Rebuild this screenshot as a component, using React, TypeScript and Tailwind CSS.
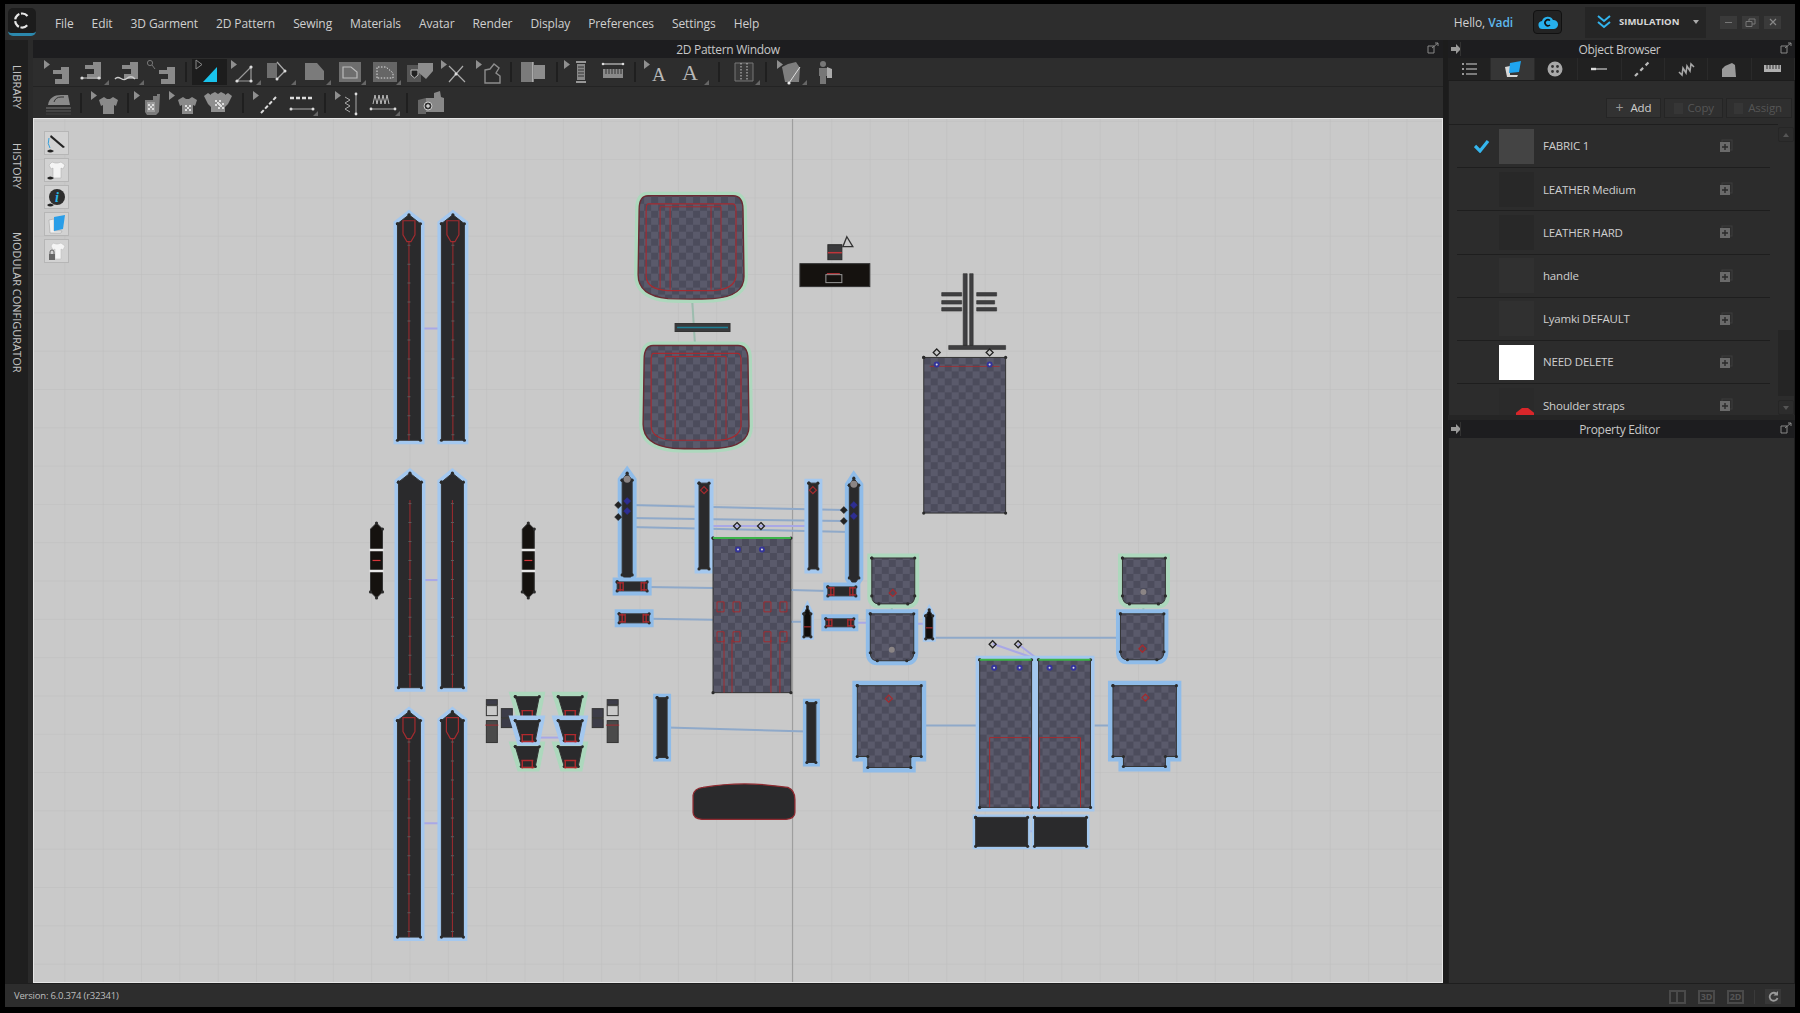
import type { ReactNode } from 'react';

const font = { fontFamily: '"Open Sans", "Noto Sans", sans-serif' };

const menu = ['File', 'Edit', '3D Garment', '2D Pattern', 'Sewing', 'Materials', 'Avatar', 'Render', 'Display', 'Preferences', 'Settings', 'Help'];

const Cur = () => <path d="M3 1v9l6-4.5z" fill="#8f8f8f" />;
const Cor = () => <path d="M33 21v5h-5z" fill="#666" />;
const Machine = ({ x = 0, y = 0 }: { x?: number; y?: number }) => (
  <path transform={`translate(${x} ${y})`} d="M0 5h8v-3h8v17h-14v-5h7v-5h-9z" fill="#8a8a8a" />
);
const Shirt = ({ x = 0, y = 0, fill = '#8a8a8a' }: { x?: number; y?: number; fill?: string }) => (
  <path transform={`translate(${x} ${y})`} d="M5 0l3 2h3l3-2 5 3-2 6-2-1v9h-11v-9l-2 1-2-6z" fill={fill} />
);
const Dots = ({ x, y }: { x: number; y: number }) => (
  <g fill="#ddd">
    <rect x={x} y={y} width="2" height="2" />
    <rect x={x + 4} y={y} width="2" height="2" />
    <rect x={x + 2} y={y + 2} width="2" height="2" />
    <rect x={x} y={y + 4} width="2" height="2" />
    <rect x={x + 4} y={y + 4} width="2" height="2" />
  </g>
);

const icons: Record<string, ReactNode> = {
  sew: (<><Cur /><Machine x={12} y={6} /></>),
  sewLine: (<><Machine x={9} y={1} /><path d="M6 19h17" stroke="#aaa" strokeWidth="1.2" /><circle cx="6" cy="19" r="1.6" fill="#ddd" /><circle cx="23" cy="19" r="1.6" fill="#ddd" /><Cor /></>),
  sewCurve: (<><Machine x={11} y={1} /><path d="M4 20c4-5 7 3 11 0s6-3 9 0" stroke="#ccc" strokeWidth="1.4" fill="none" /><Cor /></>),
  sewFind: (<><circle cx="4" cy="4" r="2.6" stroke="#777" fill="none" /><path d="M6 6l3 4" stroke="#777" /><Machine x={13} y={6} /></>),
  tri: (<><path d="M3 1v9l6-4.5z" fill="none" stroke="#888" /><path d="M10 23l14-15v15z" fill="#19c3ec" /></>),
  triLine: (<><Cur /><path d="M9 22l14-14v14z" fill="none" stroke="#999" strokeWidth="1.2" /><circle cx="9" cy="22" r="1.6" fill="#ddd" /><circle cx="23" cy="8" r="1.6" fill="#ddd" /><circle cx="23" cy="22" r="1.6" fill="#ddd" /><Cor /></>),
  shape: (<><path d="M4 4h10v15h-10z" fill="#6f6f6f" /><path d="M14 3l8 9-8 8" fill="none" stroke="#aaa" strokeWidth="1.3" /><circle cx="22" cy="12" r="1.5" fill="#ddd" /><circle cx="14" cy="20" r="1.5" fill="#ddd" /><Cor /></>),
  panel: (<><path d="M7 4h12l7 8v9h-19z" fill="#7b7b7b" /><Cor /></>),
  panelO: (<><path d="M6 3h22v20h-22z" fill="#6e6e6e" /><path d="M10 8h8l6 5v6h-14z" fill="none" stroke="#bbb" strokeWidth="1.2" /><Cor /></>),
  panelD: (<><path d="M5 3h24v20h-24z" fill="#666" /><path d="M9 19v-11h9l7 6v5z" fill="none" stroke="#ddd" strokeDasharray="1.5 1.5" /><Cor /></>),
  trace: (<><path d="M4 6h14v17h-14z" fill="#555" /><path d="M8 11h7v5l-3.5 3-3.5-3z" fill="#222" stroke="#bbb" /><path d="M15 4h15v8l-7 8-8-7z" fill="#8d8d8d" /></>),
  cross: (<><Cur /><path d="M11 7l16 16M11 23l14-16" stroke="#aaa" strokeWidth="1.2" /><circle cx="18" cy="15" r="1.5" fill="#ddd" /></>),
  notch: (<><Cur /><path d="M12 11l5-1 4-5 5 4-3 5 4 3v7h-15z" fill="none" stroke="#8d8d8d" strokeWidth="1.4" /></>),
  fold: (<><path d="M5 3h12v20h-12z" fill="#7b7b7b" /><path d="M18 6h11v14h-11z" fill="#8d8d8d" /><path d="M17 3v20" stroke="#ddd" /></>),
  ruler: (<><Cur /><path d="M15 3h10M15 23h10" stroke="#bbb" strokeWidth="1.3" /><rect x="16" y="5" width="8" height="16" fill="#888" /><path d="M17 8h6M17 11h6M17 14h6M17 17h6" stroke="#333" /></>),
  rulerH: (<><path d="M7 5h20" stroke="#bbb" strokeWidth="1.3" /><circle cx="7" cy="5" r="1.3" fill="#ddd" /><circle cx="27" cy="5" r="1.3" fill="#ddd" /><rect x="7" y="10" width="20" height="9" fill="#8a8a8a" /><path d="M10 10v5M13 10v5M16 10v5M19 10v5M22 10v5M25 10v5" stroke="#333" /></>),
  textA: (<><Cur /><text x="11" y="22" fontFamily='"Liberation Serif", serif' fontSize="19" fill="#b8b8b8">A</text></>),
  textB: (<><text x="6" y="21" fontFamily='"Liberation Serif", serif' fontSize="22" fill="#b8b8b8">A</text><Cor /></>),
  stripes: (<><path d="M8 4h18v18h-18z" fill="#3a3a3a" stroke="#777" /><path d="M14 4v18M20 4v18" stroke="#ccc" strokeDasharray="1.5 1.5" /><Cor /></>),
  measure: (<><Cur /><path d="M8 8l6-3 8-2 4 6-1 14h-14z" fill="#7e7e7e" /><path d="M15 24l11-16" stroke="#ddd" /><circle cx="15" cy="24" r="1.6" fill="#eee" /><Cor /></>),
  avatar: (<><circle cx="14" cy="5" r="3" fill="#777" /><path d="M10 9h8v8h-1v8h-6v-8h-1z" fill="#777" /><path d="M18 8l5 2v9h-5z" fill="#aaa" /></>),
  iron: (<><path d="M7 15c1-7 6-10 13-10h7l2 10z" fill="#8a8a8a" /><path d="M13 12c1-3 3-5 7-5h3" stroke="#333" fill="none" /><path d="M5 18h25" stroke="#666" strokeWidth="1.4" /><path d="M5 21h25" stroke="#4f4f4f" strokeWidth="1.4" /><path d="M5 24h25" stroke="#3e3e3e" strokeWidth="1.2" /></>),
  shirt: (<><Cur /><Shirt x={11} y={7} /></>),
  hand: (<><Cur /><path d="M14 10h8v-4h4v-2h3l-1 18-3 3h-9l-2-3z" fill="#7b7b7b" /><rect x="16" y="12" width="8" height="10" fill="#bbb" fillOpacity=".5" /><Dots x={17} y={14} /></>),
  shirtD: (<><Cur /><Shirt x={12} y={7} /><Dots x={19} y={15} /></>),
  shirtL: (<><path d="M3 6l4-3 3 2v12l-3-3z" fill="#8f8f8f" /><path d="M31 6l-4-3-3 2v12l3-3z" fill="#8f8f8f" /><path d="M10 4l4-2 3 2 3-2 4 2v18h-14z" fill="#8f8f8f" /><Dots x={14} y={10} /><Dots x={17} y={13} /></>),
  seg: (<><Cur /><path d="M11 23l15-16" stroke="#ddd" strokeWidth="2" strokeDasharray="4 2" /></>),
  stitch: (<><path d="M5 8h22" stroke="#ddd" strokeWidth="2.4" strokeDasharray="4 2" /><path d="M6 19h22" stroke="#aaa" /><circle cx="6" cy="19" r="1.5" fill="#ddd" /><circle cx="28" cy="19" r="1.5" fill="#ddd" /><Cor /></>),
  zigV: (<><Cur /><path d="M13 7l5 3-5 3 5 3-5 3 5 3" stroke="#aaa" fill="none" /><path d="M24 4v20" stroke="#aaa" /><circle cx="24" cy="4" r="1.4" fill="#ddd" /><circle cx="24" cy="24" r="1.4" fill="#ddd" /></>),
  zigH: (<><path d="M6 14l2-9 2 9 2-9 2 9 2-9 2 9 2-9 2 9" stroke="#bbb" fill="none" /><path d="M4 19h24" stroke="#aaa" /><circle cx="4" cy="19" r="1.4" fill="#ddd" /><circle cx="28" cy="19" r="1.4" fill="#ddd" /><Cor /></>),
  addPiece: (<><path d="M4 10l8-2v16h-8z" fill="#666" /><path d="M12 8h8v-5l6-2 1 6 3 1v14h-18z" fill="#888" /><circle cx="14" cy="16" r="4" fill="#333" stroke="#ccc" /><path d="M12 16h4M14 14v4" stroke="#fff" /></>),
};

const Tool = ({ name, active }: { name: string; active?: boolean }) => (
  <div className={`flex h-[26px] w-[35px] shrink-0 items-center justify-center ${active ? 'bg-[#1d1d1d]' : ''}`}>
    <svg width="34" height="26" viewBox="0 0 34 26">{icons[name]}</svg>
  </div>
);

const Sep = ({ className = '' }: { className?: string }) => <div className={`h-[20px] w-[2px] shrink-0 bg-[#1f1f1f] ${className}`} />;

const Header = ({ title }: { title: string }) => (
  <div className="relative flex h-[18px] shrink-0 items-center justify-center bg-[#1d1d1f] pr-[4px] pt-[1px] text-[12px] tracking-[-0.3px] text-[#c8c8c8]">
    <svg className="absolute left-[3px] top-[4px]" width="10" height="10" viewBox="0 0 10 10"><path d="M0 3h5v-3l5 5-5 5v-3h-5z" fill="#999" /></svg>
    <div className="absolute left-[12px] top-[2px] h-[14px] w-px bg-[#333]" />
    {title}
    <svg className="absolute right-[3px] top-[2px]" width="12" height="12" viewBox="0 0 12 12"><path d="M1 4h6v7h-6zM5 6l6-5M8 1h3v3" fill="none" stroke="#888" /></svg>
  </div>
);

const tabIcons: ReactNode[] = [
  <><path d="M2 3h2M2 8h2M2 13h2" stroke="#999" strokeWidth="2" /><path d="M6 3h11M6 8h11M6 13h11" stroke="#999" strokeWidth="1.6" /></>,
  <><path d="M2 6l5-1v9l8 0-1 2h-10z" fill="#d8d8d8" /><path d="M7 2l11-2-2 11-10 1z" fill="#1fa5f0" /></>,
  <><circle cx="9" cy="8" r="7.5" fill="#a8a8a8" /><circle cx="6.5" cy="5.5" r="1.4" fill="#333" /><circle cx="11.5" cy="5.5" r="1.4" fill="#333" /><circle cx="6.5" cy="10.5" r="1.4" fill="#333" /><circle cx="11.5" cy="10.5" r="1.4" fill="#333" /></>,
  <><path d="M2 8h15" stroke="#aaa" strokeWidth="1.5" /><path d="M1 8h5" stroke="#ddd" strokeWidth="2.4" /></>,
  <path d="M2 15l14-14" stroke="#bbb" strokeWidth="2.2" strokeDasharray="4 3.5" />,
  <path d="M2 11l3 3 1-7 3 5 1-7 3 5 1-7 3 3" stroke="#a8a8a8" strokeWidth="1.6" fill="none" />,
  <path d="M2 16v-8l3-3 7-3 3 2 1 12z" fill="#9a9a9a" />,
  <><rect x="1" y="4" width="17" height="7" fill="#b0b0b0" /><path d="M4 4v4M7 4v4M10 4v4M13 4v4M16 4v4" stroke="#333" /></>,
];

const materials = ['FABRIC 1', 'LEATHER Medium', 'LEATHER HARD', 'handle', 'Lyamki DEFAULT', 'NEED DELETE', 'Shoulder straps'];
const thumbs = ['bg-[#444444]', 'bg-[#282828]', 'bg-[#282828]', 'bg-[#303030]', 'bg-[#303030]', 'bg-white', 'bg-[#2a2a2a]'];

const MaterialRow = ({ name, index }: { name: string; index: number }) => (
  <div className="flex h-[43.2px] shrink-0 items-center border-b border-[#1e1e1e] pl-[16px] text-[11.5px] tracking-[-0.2px] text-[#cfcfcf]">
    <div className="flex w-[18px] justify-center">
      {index === 0 && (
        <svg width="16" height="13" viewBox="0 0 16 13"><path d="M1 6l5 5 8-10" fill="none" stroke="#35b6ee" strokeWidth="3.2" /></svg>
      )}
    </div>
    <div className={`relative ml-[8px] h-[35px] w-[35px] overflow-hidden ${thumbs[index]}`}>
      {index === 6 && <div className="absolute left-[17px] top-[20px] h-[9px] w-[18px] bg-[#d8262a] [clip-path:polygon(35%_0,65%_0,100%_55%,100%_100%,0_100%,0_55%)]" />}
    </div>
    <span className="ml-[9px] w-[176px]">{name}</span>
    <svg width="14" height="14" viewBox="0 0 14 14"><rect x="3" y="1" width="10" height="10" fill="none" stroke="#3c3c3c" /><rect x="1" y="3" width="10" height="10" fill="#6a6a6a" /><path d="M6 5v6M3 8h6" stroke="#2a2a2a" strokeWidth="1.4" /></svg>
  </div>
);

/* pattern pieces below use screen coordinates, the svg viewBox is set to match */
const RED = '#a32b2f';
const BLUE = '#a4c8ef';
const DEEP = '#8fbce9';
const GREEN = '#add8bd';
const LINE = '#8fa9c9';
const VIOLET = '#a9a8e6';
const DARK = '#2a2a2c';

const Halo = ({ d, color = BLUE, w = 8 }: { d: string; color?: string; w?: number }) => (
  <path d={d} fill={color} stroke={color} strokeWidth={w} strokeLinejoin="miter" />
);

const Piece = ({ d, halo, fill = DARK, w }: { d: string; halo?: string; fill?: string; w?: number }) => (
  <>
    {halo && <Halo d={d} color={halo} w={w} />}
    <path d={d} fill={fill} stroke="#333" strokeWidth="1" markerStart="url(#pt)" markerMid="url(#pt)" markerEnd="url(#pt)" />
  </>
);

const Strap = ({ x, x2, top, bottom, u }: { x: number; x2: number; top: number; bottom: number; u?: boolean }) => {
  const c = (x + x2) / 2;
  const d = `M${x} ${top + 9}L${c} ${top}L${x2} ${top + 9}V${bottom}H${x}Z`;
  return (
    <>
      <Piece d={d} halo={BLUE} />
      <path d={`M${c} ${top + 27}V${bottom}`} stroke={RED} strokeWidth="1" />
      <path d={`M${c} ${top + 30}V${bottom}`} stroke="#5c5c5c" strokeWidth="3" strokeDasharray="1 18" />
      {u && <path d={`M${c - 6} ${top + 6}H${c + 6}V${top + 20}L${c + 2} ${top + 27}H${c - 2}L${c - 6} ${top + 20}Z`} fill="none" stroke={RED} strokeWidth="1.2" />}
    </>
  );
};

const Pillow = ({ x, y, w, h }: { x: number; y: number; w: number; h: number }) => {
  const d = `M${x + 10} ${y}H${x + w - 10}Q${x + w} ${y} ${x + w} ${y + 14}L${x + w + 1} ${y + h - 22}Q${x + w + 1} ${y + h - 2} ${x + w - 30} ${y + h}Q${x + w / 2} ${y + h + 1} ${x + 30} ${y + h}Q${x} ${y + h - 3} ${x} ${y + h - 24}L${x + 1} ${y + 14}Q${x + 1} ${y} ${x + 10} ${y}Z`;
  return (
    <>
      <Halo d={d} color={GREEN} w={8} />
      <path d={d} fill="url(#checker)" stroke="#6b2a33" strokeWidth="1.4" />
      <path d={`M${x + 10} ${y + 8}H${x + w - 10}Q${x + w - 7} ${y + 8} ${x + w - 7} ${y + 16}V${y + h - 22}Q${x + w - 9} ${y + h - 9} ${x + w - 30} ${y + h - 8}H${x + 30}Q${x + 9} ${y + h - 9} ${x + 8} ${y + h - 22}V${y + 16}Q${x + 8} ${y + 8} ${x + 10} ${y + 8}Z`} fill="none" stroke="#a52a30" strokeWidth="1.2" />
      <path d={`M${x + 22} ${y + 11}V${y + h - 10}M${x + 32} ${y + 11}V${y + h - 9}M${x + w - 32} ${y + 11}V${y + h - 9}M${x + w - 22} ${y + 11}V${y + h - 10}M${x + 22} ${y + 11}H${x + w - 22}`} fill="none" stroke="#a52a30" strokeWidth="1" />
    </>
  );
};

const Diamond = ({ x, y, color = '#222', hollow }: { x: number; y: number; color?: string; hollow?: boolean }) => (
  <path d={`M${x} ${y - 3.5}L${x + 3.5} ${y}L${x} ${y + 3.5}L${x - 3.5} ${y}Z`} fill={hollow ? 'none' : color} stroke={color} strokeWidth={hollow ? 1.3 : 0.6} />
);

const BlueDot = ({ x, y }: { x: number; y: number }) => (
  <>
    <circle cx={x} cy={y} r="3" fill="#34349a" />
    <circle cx={x} cy={y} r="1" fill="#ddd" />
  </>
);

const Tab = ({ x, y, w, h, halo = DEEP }: { x: number; y: number; w: number; h: number; halo?: string }) => (
  <>
    <Piece d={`M${x} ${y}h${w}v${h}h${-w}Z`} halo={halo} w={9} />
    <path d={`M${x + 3} ${y}v${h}M${x + 6} ${y}v${h}M${x + w - 3} ${y}v${h}M${x + w - 6} ${y}v${h}M${x} ${y + 1}h6M${x} ${y + h - 1}h6M${x + w - 6} ${y + 1}h6M${x + w - 6} ${y + h - 1}h6`} stroke="#b02a2e" strokeWidth="1.3" fill="none" />
  </>
);

const pocket = (x: number, y: number, w: number, h: number) =>
  `M${x} ${y}H${x + w}V${y + h - 8}Q${x + w} ${y + h} ${x + w - 7} ${y + h}H${x + 7}Q${x} ${y + h} ${x} ${y + h - 8}Z`;

const Trapezoid = ({ cx, y, halo }: { cx: number; y: number; halo: string }) => {
  const d = `M${cx - 12} ${y}H${cx + 12}L${cx + 8} ${y + 20}H${cx - 6}Z`;
  return (
    <>
      <Piece d={d} halo={halo} w={10} />
      <path d={`M${cx - 6} ${y + 14}H${cx + 6}M${cx - 5} ${y + 14}V${y + 22}M${cx + 5} ${y + 14}V${y + 22}M${cx - 6} ${y + 21}H${cx + 7}`} stroke="#b02a2e" strokeWidth="1.4" fill="none" />
    </>
  );
};

const SmallBlack = ({ x, y, w, h }: { x: number; y: number; w: number; h: number }) => (
  <>
    <path d={`M${x} ${y + 6}L${x + w / 2} ${y}L${x + w} ${y + 6}V${y + h - 6}L${x + w / 2} ${y + h}L${x} ${y + h - 6}Z`} fill="#15120f" stroke="#333" markerMid="url(#pt)" />
    <path d={`M${x - 1} ${y + 27}h${w + 2}M${x - 1} ${y + 48}h${w + 2}`} stroke="#e8e8e8" strokeWidth="2.5" />
    <path d={`M${x + 2} ${y + 37.5}h${w - 4}`} stroke="#d8363a" strokeWidth="1.2" />
  </>
);

const Brackets = ({ x, x2 }: { x: number; x2: number }) => (
  <>
    <rect x={x} y="700" width="11" height="5" fill="#3c3c48" stroke="#333" />
    <rect x={x} y="706" width="11" height="10" fill="none" stroke="#333" />
    <rect x={x} y="721" width="11" height="22" fill="#4a4a4a" stroke="#333" />
    <path d={`M${x - 1} 725.5h13`} stroke={RED} />
    <rect x={x2} y="709" width="11" height="9" fill="#3c3c48" stroke="#333" />
    <rect x={x2} y="719" width="11" height="9" fill="#3c3c48" stroke="#333" />
  </>
);

function PatternCanvas() {
  return (
    <svg className="absolute inset-0 h-full w-full" viewBox="33 118 1410 865" preserveAspectRatio="none">
      <defs>
        <pattern id="grid" x="25" y="43" width="38.4" height="38.4" patternUnits="userSpaceOnUse">
          <path d="M38.4 0H0V38.4" fill="none" stroke="#bdbdbd" strokeWidth="1" />
        </pattern>
        <pattern id="checker" width="14" height="14" patternUnits="userSpaceOnUse">
          <rect width="14" height="14" fill="#4c4c5c" />
          <rect width="7" height="7" fill="#5a5a6b" />
          <rect x="7" y="7" width="7" height="7" fill="#5a5a6b" />
        </pattern>
        <marker id="pt" markerUnits="userSpaceOnUse" markerWidth="5" markerHeight="5" refX="2.5" refY="2.5">
          <circle cx="2.5" cy="2.5" r="1.6" fill="#2b2b2b" />
        </marker>
      </defs>
      <rect x="33" y="118" width="1410" height="865" fill="#c9c9c9" />
      <rect x="33" y="118" width="1410" height="865" fill="url(#grid)" />
      <path d="M792.5 118V983" stroke="#9b9b9b" strokeWidth="1" />

      {/* links */}
      <g fill="none" strokeWidth="2">
        <path d="M420 328H441M421 580H441M420 824H441" stroke={VIOLET} />
        <path d="M692 298L695 345" stroke="#9cbcae" />
        <path d="M630 505L844 510M630 518L844 521M630 527L850 532M647 587L713 588M649 619L713 620M791 590L828 591M791 622L805 622M667 728L807 732M933 638L1121 638M921 726L980 726M1095 726L1113 726" stroke={LINE} />
        <path d="M709 526H809M856 623H870M915 624H926M993 644L1039 660M1018 644L1039 660M1032 735H1039M1028 832H1035" stroke={VIOLET} />
        <path d="M892 604V614M1144 604V614" stroke="#9cbcae" />
        <path d="M538 738H561" stroke={VIOLET} />
      </g>

      {/* long straps */}
      <Strap x={397} x2={420} top={214} bottom={440} u />
      <Strap x={441} x2={464} top={214} bottom={440} u />
      <Strap x={398} x2={421} top={473} bottom={688} />
      <Strap x={441} x2={463} top={473} bottom={688} />
      <Strap x={397} x2={420} top={712} bottom={938} u />
      <Strap x={441} x2={463} top={712} bottom={938} u />
      <SmallBlack x={370} y={523} w={12} h={75} />
      <SmallBlack x={522} y={523} w={12} h={75} />

      {/* cuffs */}
      <Brackets x={486} x2={501} />
      <Brackets x={607} x2={592} />
      <Trapezoid cx={527} y={697} halo={GREEN} />
      <Trapezoid cx={570} y={697} halo={GREEN} />
      <Trapezoid cx={527} y={747} halo={GREEN} />
      <Trapezoid cx={570} y={747} halo={GREEN} />
      <Trapezoid cx={527} y={721} halo={BLUE} />
      <Trapezoid cx={570} y={721} halo={BLUE} />

      {/* pillows */}
      <Pillow x={638} y={195} w={105} h={103} />
      <Pillow x={643} y={345} w={105} h={103} />
      <rect x="675" y="323" width="55" height="8" fill="#3a3a3c" stroke="#333" />
      <path d="M677 327H728" stroke="#1c7f95" strokeWidth="1.4" />

      {/* tag */}
      <rect x="828" y="244" width="14" height="15" fill="#3a3a3c" stroke="#2b2b2b" />
      <path d="M828 252H842" stroke="#c0353a" strokeWidth="1.5" />
      <path d="M847 236L853 246H843Z" fill="none" stroke="#333" strokeWidth="1.3" />
      <rect x="800" y="263" width="70" height="23" fill="#15120f" stroke="#333" />
      <rect x="826" y="274" width="16" height="8" fill="none" stroke="#999" />
      <path d="M827 273H840" stroke="#c0353a" />

      {/* back panel with T */}
      <path d="M963.5 273h4v72h-4zM970 273h3.5v72h-3.5zM949 345h57v4h-57zM942 292h20v3.5h-20zM942 300h20v3.5h-20zM942 307h20v3.5h-20zM977 292h20v3.5h-20zM977 300h18v3.5h-18zM977 307h20v3.5h-20z" fill="#3f3f41" stroke="#333" strokeWidth=".6" />
      <Diamond x={937} y={352} hollow />
      <Diamond x={990} y={352} hollow />
      <Piece d="M924 357H1006V513H924Z" fill="url(#checker)" />
      <path d="M930 366H1000" stroke={RED} strokeWidth=".8" />
      <BlueDot x={937} y={364} />
      <BlueDot x={990} y={364} />

      {/* front panel group */}
      <Piece d="M622 480L627 473L632 480V575L627 582L622 575Z" halo={DEEP} w={9} />
      <Piece d="M699 483H709V569H699Z" halo={BLUE} w={9} />
      <Piece d="M809 483H818V569H809Z" halo={BLUE} w={9} />
      <Piece d="M849.5 485L854 478L859 485V578L854 585L849.5 578Z" halo={DEEP} w={9} />
      <circle cx="627" cy="479" r="3.5" fill="#8b8585" />
      <circle cx="854" cy="484" r="3.5" fill="#8b8585" />
      <Diamond x={627} y={501} color="#2e2e92" />
      <Diamond x={627} y={511} color="#2e2e92" />
      <Diamond x={854} y={505} color="#2e2e92" />
      <Diamond x={854} y={516} color="#2e2e92" />
      <Diamond x={618} y={505} />
      <Diamond x={618} y={517} />
      <Diamond x={844} y={510} />
      <Diamond x={844} y={521} />
      <Diamond x={704} y={490} color={RED} hollow />
      <Diamond x={813} y={490} color={RED} hollow />
      <Diamond x={737} y={526} hollow />
      <Diamond x={761} y={526} hollow />

      <Piece d="M713 538H791V693H713Z" fill="url(#checker)" />
      <path d="M713 538H791" stroke="#3cb54a" strokeWidth="2" />
      <BlueDot x={738} y={549.5} />
      <BlueDot x={762} y={549.5} />
      <path d="M717 602h7v10h-7zM733 602h7v10h-7zM764 602h7v10h-7zM780 602h7v10h-7zM717 632h7v10h-7zM733 632h7v10h-7zM764 632h7v10h-7zM780 632h7v10h-7zM724 640V693M732 640V693M771 640V693M780 640V693" fill="none" stroke={RED} strokeWidth="1" />

      <Tab x={617} y={582} w={30} h={9} />
      <Tab x={619} y={614} w={30} h={9} />
      <Tab x={828} y={587} w={28} h={9} />
      <Tab x={826} y={619} w={28} h={8} />
      <Piece d="M804 614L807.5 607L811 614V637H804Z" fill="#100e0c" halo={BLUE} w={6} />
      <path d="M804 627H811" stroke={RED} strokeWidth="1.2" />
      <Piece d="M926 616L929.5 610L933 616V639H926Z" fill="#100e0c" halo={BLUE} w={6} />
      <path d="M926 628H933" stroke={RED} strokeWidth="1.2" />

      {/* pockets */}
      <Piece d={pocket(872, 558, 43, 46)} halo={GREEN} fill="url(#checker)" w={9} />
      <Piece d={pocket(870.5, 614, 43.5, 47)} halo={DEEP} fill="url(#checker)" w={9} />
      <Piece d={pocket(1123, 558, 43, 46)} halo={GREEN} fill="url(#checker)" w={9} />
      <Piece d={pocket(1121, 614, 43.5, 46)} halo={DEEP} fill="url(#checker)" w={9} />
      <Diamond x={893} y={593} color={RED} hollow />
      <circle cx="892" cy="650" r="3" fill="#8b8585" />
      <circle cx="1144" cy="592" r="3" fill="#8b8585" />
      <Diamond x={1143} y={649} color={RED} hollow />

      <Piece d="M857.5 686H921.5V757H911V768H868V757H857.5Z" halo={DEEP} fill="url(#checker)" w={10} />
      <Piece d="M1113.5 686H1177V757H1166V767H1124V757H1113.5Z" halo={DEEP} fill="url(#checker)" w={10} />
      <Diamond x={889} y={699} color={RED} hollow />
      <Diamond x={1146} y={698} color={RED} hollow />

      <Piece d="M980 660H1032V808H980Z" halo={BLUE} w={8} fill="url(#checker)" />
      <Piece d="M1039 660H1091V808H1039Z" halo={BLUE} w={8} fill="url(#checker)" />
      <path d="M980 660H1032M1039 660H1091" stroke="#3cb54a" strokeWidth="2" />
      <path d="M990 808V738H1030.5V808M1040 808V738H1081V808" fill="none" stroke={RED} strokeWidth="1" />
      <BlueDot x={994.5} y={668} />
      <BlueDot x={1020} y={668} />
      <BlueDot x={1050} y={668} />
      <BlueDot x={1074} y={668} />
      <Diamond x={993} y={644.5} hollow />
      <Diamond x={1018.5} y={644.5} hollow />
      <Piece d="M976 818H1028V847H976Z" halo={BLUE} w={6} />
      <Piece d="M1035 818H1087V847H1035Z" halo={BLUE} w={6} />

      {/* small bars and oblong */}
      <Piece d="M657 698H667V758H657Z" halo={DEEP} w={8} />
      <Piece d="M807 703H816V763H807Z" halo={DEEP} w={8} />
      <path d="M703 788Q744 781 788 788Q795 791 795 800V813Q795 819 786 820H702Q693 819 693 813V796Q694 789 703 788Z" fill={DARK} stroke="#8f2a30" strokeWidth="1.3" />
    </svg>
  );
}

const Palette = ({ children }: { children: ReactNode }) => (
  <div className="flex h-[24px] w-[25px] items-center justify-center border border-[#b6b6b6] bg-[#d2d2d2]">
    <svg width="21" height="21" viewBox="0 0 21 21">{children}</svg>
  </div>
);

const Eye = () => <path d="M1 18q3-3 7 0-4 3-7 0z" fill="#222" />;

export default function App() {
  return (
    <div className="h-[1013px] w-[1800px] overflow-hidden bg-black pb-[6px] pl-[5px] pr-[5px] pt-[4px]" style={font}>
      <div className="flex h-full flex-col bg-[#2d2d2d]">
        {/* title bar */}
        <div className="flex h-[36px] shrink-0 items-center bg-[#2d2d2d] text-[12px] tracking-[-0.1px] text-[#d0d0d0]">
          <div className="ml-[3px] flex h-[28px] w-[28px] items-center justify-center rounded-[5px] border-b-[3px] border-[#2b88ad] bg-[#1c1c1c]">
            <svg width="17" height="17" viewBox="0 0 17 17"><path d="M13.5 4A7 7 0 1 0 13.5 13" fill="none" stroke="#e8e8e8" strokeWidth="2.2" strokeDasharray="7 1.6" /></svg>
          </div>
          <nav className="ml-[19px] flex gap-[18px] pt-[3px]">
            {menu.map((m) => <span key={m}>{m}</span>)}
          </nav>
          <div className="ml-auto flex items-center">
            <span className="pt-[1px]">Hello, <span className="font-semibold text-[#5db8ee]">Vadi</span></span>
            <div className="ml-[20px] flex h-[24px] w-[29px] items-center justify-center rounded-[4px] border border-[#111] bg-[#232323]">
              <svg width="20" height="15" viewBox="0 0 20 15"><path d="M5 14a4 4 0 0 1-1-8 6 6 0 0 1 11-1 4.5 4.5 0 0 1 1 9z" fill="#27b0ec" /><path d="M12 5.5a3 3 0 1 0 0 4.5" fill="none" stroke="#111" strokeWidth="1.6" /></svg>
            </div>
            <div className="ml-[23px] flex h-[31px] w-[121px] items-center bg-[#252525] pl-[12px]">
              <svg width="14" height="14" viewBox="0 0 14 14"><path d="M1 1l6 5 6-5M1 7l6 5 6-5" fill="none" stroke="#32b4ee" strokeWidth="2" /></svg>
              <span className="ml-[8px] text-[9.5px] font-bold tracking-normal text-[#d8d8d8]">SIMULATION</span>
              <div className="ml-[14px] h-0 w-0 border-x-[3px] border-t-[4px] border-x-transparent border-t-[#aaa]" />
            </div>
            <div className="ml-[14px] mr-[14px] flex gap-[5px]">
              <div className="flex h-[13px] w-[17px] items-center justify-center bg-[#3a3a3a]"><div className="h-px w-[7px] bg-[#777]" /></div>
              <div className="flex h-[13px] w-[17px] items-center justify-center bg-[#3a3a3a]">
                <svg width="11" height="9" viewBox="0 0 11 9"><path d="M1 3.5h6v5h-6zM4 3V1h6v5h-3" fill="none" stroke="#777" /></svg>
              </div>
              <div className="flex h-[13px] w-[17px] items-center justify-center bg-[#3a3a3a]">
                <svg width="8" height="8" viewBox="0 0 8 8"><path d="M1 1l6 6M7 1l-6 6" stroke="#888" strokeWidth="1.2" /></svg>
              </div>
            </div>
          </div>
        </div>

        <div className="flex min-h-0 flex-1">
          {/* left rail */}
          <div className="flex w-[23px] shrink-0 flex-col items-center bg-[#1f1f1f] pt-[25px] text-[11px] text-[#c4c4c4]">
            <span className="h-[78px] tracking-[0.2px] [writing-mode:vertical-rl]">LIBRARY</span>
            <span className="h-[89px] tracking-[0.2px] [writing-mode:vertical-rl]">HISTORY</span>
            <span className="[writing-mode:vertical-rl]">MODULAR CONFIGURATOR</span>
          </div>
          <div className="w-[5px] shrink-0 bg-[#2a2a2a]" />

          {/* 2D window */}
          <div className="flex w-[1410px] shrink-0 flex-col">
            <div className="relative flex h-[18px] shrink-0 items-center justify-center bg-[#1d1d1f] pr-[20px] pt-[1px] text-[12px] tracking-[-0.3px] text-[#c8c8c8]">
              2D Pattern Window
              <svg className="absolute right-[4px] top-[2px]" width="12" height="12" viewBox="0 0 12 12"><path d="M1 4h6v7h-6zM5 6l6-5M8 1h3v3" fill="none" stroke="#888" /></svg>
            </div>
            <div className="flex h-[29px] shrink-0 items-center border-b border-[#232323] pl-[7px]">
              <Tool name="sew" /><Tool name="sewLine" /><Tool name="sewCurve" /><Tool name="sewFind" />
              <Sep className="mx-[5px]" />
              <Tool name="tri" active /><Tool name="triLine" /><Tool name="shape" /><Tool name="panel" /><Tool name="panelO" /><Tool name="panelD" /><Tool name="trace" /><Tool name="cross" /><Tool name="notch" />
              <Sep className="mx-[3px]" />
              <Tool name="fold" />
              <Sep className="ml-[6px] mr-[2px]" />
              <Tool name="ruler" /><Tool name="rulerH" />
              <Sep className="mx-[4px]" />
              <Tool name="textA" /><Tool name="textB" />
              <Sep className="ml-[8px] mr-[6px]" />
              <Tool name="stripes" />
              <Sep className="ml-[4px] mr-[6px]" />
              <Tool name="measure" /><Tool name="avatar" />
            </div>
            <div className="flex h-[31px] shrink-0 items-center pl-[7px]">
              <Tool name="iron" />
              <Sep className="mx-[5px]" />
              <Tool name="shirt" />
              <Sep className="ml-[5px] mr-[1px]" />
              <Tool name="hand" /><Tool name="shirtD" /><Tool name="shirtL" />
              <Sep className="ml-[7px] mr-[5px]" />
              <Tool name="seg" /><Tool name="stitch" />
              <Sep className="mx-[5px]" />
              <Tool name="zigV" /><Tool name="zigH" />
              <Sep className="mx-[5px]" />
              <Tool name="addPiece" />
            </div>
            <div className="relative min-h-0 flex-1 border border-[#e6e6e6]">
              <PatternCanvas />
              <div className="absolute left-[10px] top-[12px] flex flex-col gap-[3px]">
                <Palette><path d="M5 2l14 12-2 1L4 4z" fill="#222" /><path d="M3 5Q1 11 4 15" stroke="#35a0dc" fill="none" /><Eye /></Palette>
                <Palette><path d="M6 2l3 1h3l3-1 4 3-2 4-2-1v10H7V8L5 9 3 5z" fill="#f4f4f4" stroke="#aaa" strokeWidth=".5" /><Eye /></Palette>
                <Palette><circle cx="11" cy="10" r="8" fill="#2e2e2e" /><text x="11" y="15" textAnchor="middle" fontFamily='"Liberation Serif", serif' fontStyle="italic" fontWeight="700" fontSize="14" fill="#28b5e8">i</text><Eye /></Palette>
                <Palette><path d="M3 6l5-1v12h8l-1 2H4z" fill="#f2f2f2" stroke="#999" strokeWidth=".5" /><path d="M8 3l11-2-2 14-9 2z" fill="#2a9ee8" /></Palette>
                <Palette><path d="M7 2l3 1h2l3-1 4 3-2 4-2-1v10H9V8L7 9 5 5z" fill="#f4f4f4" stroke="#bbb" strokeWidth=".5" /><rect x="3" y="13" width="6" height="6" fill="#666" /><path d="M4 13v-2a2 2 0 0 1 4 0v2" fill="none" stroke="#666" /></Palette>
              </div>
            </div>
          </div>
          <div className="w-[5px] shrink-0 bg-[#1c1c1c]" />

          {/* right panels */}
          <div className="flex min-w-0 flex-1 flex-col">
            <Header title="Object Browser" />
            <div className="flex h-[23px] shrink-0 border-b border-[#1c1c1c] bg-[#212121]">
              {tabIcons.map((t, i) => (
                <div key={i} className={`flex w-[43.4px] items-center justify-center border-r border-[#2a2a2a] ${i === 1 ? 'bg-[#363636]' : ''}`}>
                  <svg width="19" height="17" viewBox="0 0 19 17">{t}</svg>
                </div>
              ))}
            </div>
            <div className="flex h-[334px] shrink-0 flex-col border-x border-[#1f1f1f] bg-[#2c2c2c]">
              <div className="flex h-[43px] shrink-0 items-start justify-end gap-[3px] pr-[2px] pt-[17px] text-[11.5px] tracking-[-0.1px]">
                <div className="flex h-[20px] w-[55px] items-center justify-center gap-[7px] border border-[#252525] bg-[#323232] text-[#cfcfcf]">
                  <span className="text-[14px] leading-none text-[#999]">+</span>Add
                </div>
                <div className="flex h-[20px] w-[59px] items-center justify-between border border-[#252525] bg-[#2f2f2f] pl-[9px] pr-[8px] text-[#555]">
                  <div className="h-[11px] w-[9px] bg-[#363636]" />Copy
                </div>
                <div className="flex h-[20px] w-[66px] items-center justify-between border border-[#252525] bg-[#2f2f2f] pl-[7px] pr-[9px] text-[#555]">
                  <div className="h-[11px] w-[9px] bg-[#363636]" />Assign
                </div>
              </div>
              <div className="flex min-h-0 flex-1">
                <div className="min-h-0 flex-1 overflow-hidden border-t border-[#1e1e1e] pl-[8px] pr-[8px]">
                  {materials.map((m, i) => <MaterialRow key={m} name={m} index={i} />)}
                </div>
                <div className="flex w-[16px] shrink-0 flex-col pt-[3px]">
                  <div className="flex h-[15px] items-center justify-center rounded-[2px] border border-[#262626]">
                    <div className="h-0 w-0 border-x-[3px] border-b-[4px] border-x-transparent border-b-[#555]" />
                  </div>
                  <div className="flex-1 pt-[188px]"><div className="h-[66px] bg-[#252525]" /></div>
                  <div className="flex h-[15px] items-center justify-center rounded-[2px] border border-[#262626]">
                    <div className="h-0 w-0 border-x-[3px] border-t-[4px] border-x-transparent border-t-[#555]" />
                  </div>
                </div>
              </div>
            </div>
            <div className="h-[5px] shrink-0 bg-[#252525]" />
            <Header title="Property Editor" />
            <div className="min-h-0 flex-1 border-x border-[#1f1f1f] bg-[#2d2d2d]" />
          </div>
        </div>

        {/* status bar */}
        <div className="flex h-[24px] shrink-0 items-center border-t border-[#1e1e1e] bg-[#2d2d2d] pl-[9px] pr-[14px] pt-[2px] text-[9.5px] tracking-[-0.2px] text-[#bdbdbd]">
          <span>Version: 6.0.374 (r32341)</span>
          <div className="ml-auto flex items-center text-[9px] font-bold text-[#555]">
            <div className="flex h-[14px] w-[17px] border-2 border-[#4a4a4a]"><div className="ml-[5px] w-[2px] bg-[#4a4a4a]" /></div>
            <div className="ml-[12px] flex h-[14px] w-[17px] items-center justify-center border-2 border-[#4a4a4a] leading-none">3D</div>
            <div className="ml-[12px] flex h-[14px] w-[17px] items-center justify-center border-2 border-[#4a4a4a] leading-none">2D</div>
            <div className="ml-[10px] h-[14px] w-px bg-[#3a3a3a]" />
            <div className="ml-[10px] flex h-[15px] w-[16px] items-center justify-center bg-[#383838]">
              <svg width="11" height="11" viewBox="0 0 11 11"><path d="M9 3.5A4 4 0 1 0 9.5 7" fill="none" stroke="#9a9a9a" strokeWidth="1.8" /><path d="M10 0v4.5H5.5z" fill="#9a9a9a" /></svg>
            </div>
          </div>
        </div>
      </div>
    </div>
  );
}
